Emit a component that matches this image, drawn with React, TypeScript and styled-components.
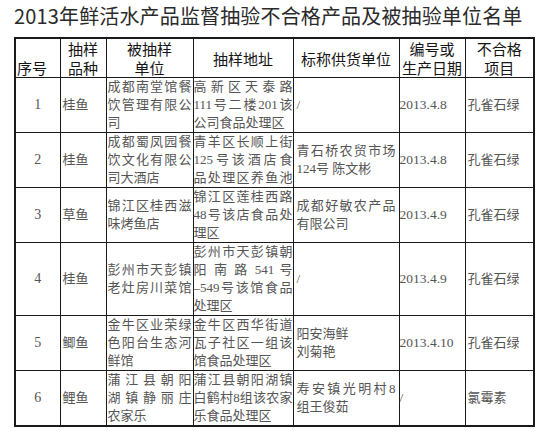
import React from 'react';
import styled, { createGlobalStyle } from 'styled-components';

const Global = createGlobalStyle`
  html, body { margin: 0; padding: 0; background: #ffffff; }
  body { width: 550px; height: 445px; overflow: hidden; }
`;

const Page = styled.div`
  padding: 5px 0 0 14px;
  font-family: "Noto Sans CJK SC", sans-serif;
`;

const Title = styled.h1`
  margin: 0 0 10px;
  font-family: "Noto Sans CJK SC", sans-serif;
  font-size: 20px;
  line-height: 22px;
  font-weight: 400;
  color: #2a2a2a;
  letter-spacing: 0.15px;
  white-space: nowrap;
`;

const Table = styled.table`
  border-collapse: collapse;
  table-layout: fixed;
  width: 521px;
  border: 2px solid #1a1a1a;
`;

const Col = styled.col<{ $w: number }>`
  width: ${p => p.$w}px;
`;

const HeadCell = styled.th<{ $align?: 'left' | 'center'; $valign?: 'middle' | 'bottom' }>`
  border: 1px solid #1a1a1a;
  padding: 0 1px;
  font-family: "Noto Sans CJK SC", sans-serif;
  font-size: 15px;
  line-height: 19px;
  font-weight: 400;
  color: #151515;
  text-align: ${p => p.$align ?? 'center'};
  vertical-align: ${p => p.$valign ?? 'middle'};
  white-space: nowrap;
`;

const Cell = styled.td<{ $align?: 'left' | 'center'; $pad?: number; $size?: number }>`
  border: 1px solid #1a1a1a;
  padding: 0 ${p => p.$pad ?? 1}px;
  font-family: "Liberation Serif", "Noto Sans CJK SC", serif;
  font-size: ${p => p.$size ?? 13}px;
  line-height: 18px;
  color: #555555;
  text-align: ${p => p.$align ?? 'left'};
  vertical-align: middle;
`;

const Line = styled.div<{ $justify?: boolean }>`
  text-align: ${p => (p.$justify ? 'justify' : 'left')};
  text-align-last: ${p => (p.$justify ? 'justify' : 'auto')};
  white-space: ${p => (p.$justify ? 'normal' : 'nowrap')};
`;

type L = { t: string; j?: boolean };
const j = (t: string): L => ({ t, j: true });
const p = (t: string): L => ({ t });

type Row = {
  no: string;
  kind: string;
  unit: L[];
  addr: L[];
  supplier: L[];
  date: string;
  item: string;
};

const rows: Row[] = [
  {
    no: '1',
    kind: '桂鱼',
    unit: [j('成都南堂馆餐'), j('饮管理有限公'), p('司')],
    addr: [j('高新区天泰路'), j('111号二楼201该'), p('公司食品处理区')],
    supplier: [p('/')],
    date: '2013.4.8',
    item: '孔雀石绿',
  },
  {
    no: '2',
    kind: '桂鱼',
    unit: [j('成都蜀凤园餐'), j('饮文化有限公'), p('司大酒店')],
    addr: [j('青羊区长顺上街'), j('125号该酒店食'), j('品处理区养鱼池')],
    supplier: [j('青石桥农贸市场'), p('124号 陈文彬')],
    date: '2013.4.8',
    item: '孔雀石绿',
  },
  {
    no: '3',
    kind: '草鱼',
    unit: [j('锦江区桂西滋'), p('味烤鱼店')],
    addr: [j('锦江区莲桂西路'), j('48号该店食品处'), p('理区')],
    supplier: [j('成都好敏农产品'), p('有限公司')],
    date: '2013.4.9',
    item: '孔雀石绿',
  },
  {
    no: '4',
    kind: '桂鱼',
    unit: [j('彭州市天彭镇'), j('老灶房川菜馆')],
    addr: [j('彭州市天彭镇朝'), j('阳 南 路 541 号'), j('–549号该馆食品'), p('处理区')],
    supplier: [p('/')],
    date: '2013.4.9',
    item: '孔雀石绿',
  },
  {
    no: '5',
    kind: '鲫鱼',
    unit: [j('金牛区业荣绿'), j('色阳台生态河'), p('鲜馆')],
    addr: [j('金牛区西华街道'), j('瓦子社区一组该'), p('馆食品处理区')],
    supplier: [p('阳安海鲜'), p('刘菊艳')],
    date: '2013.4.10',
    item: '孔雀石绿',
  },
  {
    no: '6',
    kind: '鲤鱼',
    unit: [j('蒲江县朝阳'), j('湖镇静丽庄'), p('农家乐')],
    addr: [j('蒲江县朝阳湖镇'), j('白鹤村8组该农家'), p('乐食品处理区')],
    supplier: [j('寿安镇光明村8'), p('组王俊茹')],
    date: '/',
    item: '氯霉素',
  },
];

const Lines = ({ lines }: { lines: L[] }) => (
  <>
    {lines.map((l, i) => (
      <Line key={i} $justify={l.j}>
        {l.t}
      </Line>
    ))}
  </>
);

export default function App() {
  return (
    <>
      <Global />
      <Page>
        <Title>2013年鲜活水产品监督抽验不合格产品及被抽验单位名单</Title>
        <Table>
          <colgroup>
            <Col $w={45} />
            <Col $w={46} />
            <Col $w={87} />
            <Col $w={100} />
            <Col $w={106} />
            <Col $w={66} />
            <Col $w={69} />
          </colgroup>
          <thead>
            <tr>
              <HeadCell $align="left" $valign="bottom">序号</HeadCell>
              <HeadCell>抽样<br />品种</HeadCell>
              <HeadCell>被抽样<br />单位</HeadCell>
              <HeadCell>抽样地址</HeadCell>
              <HeadCell>标称供货单位</HeadCell>
              <HeadCell>编号或<br />生产日期</HeadCell>
              <HeadCell>不合格<br />项目</HeadCell>
            </tr>
          </thead>
          <tbody>
            {rows.map(r => (
              <tr key={r.no}>
                <Cell $align="center" $size={14}>{r.no}</Cell>
                <Cell $pad={2}>{r.kind}</Cell>
                <Cell $pad={1}><Lines lines={r.unit} /></Cell>
                <Cell $pad={0}><Lines lines={r.addr} /></Cell>
                <Cell $pad={3}><Lines lines={r.supplier} /></Cell>
                <Cell $pad={0} $size={13.5}>{r.date}</Cell>
                <Cell $pad={2}>{r.item}</Cell>
              </tr>
            ))}
          </tbody>
        </Table>
      </Page>
    </>
  );
}
